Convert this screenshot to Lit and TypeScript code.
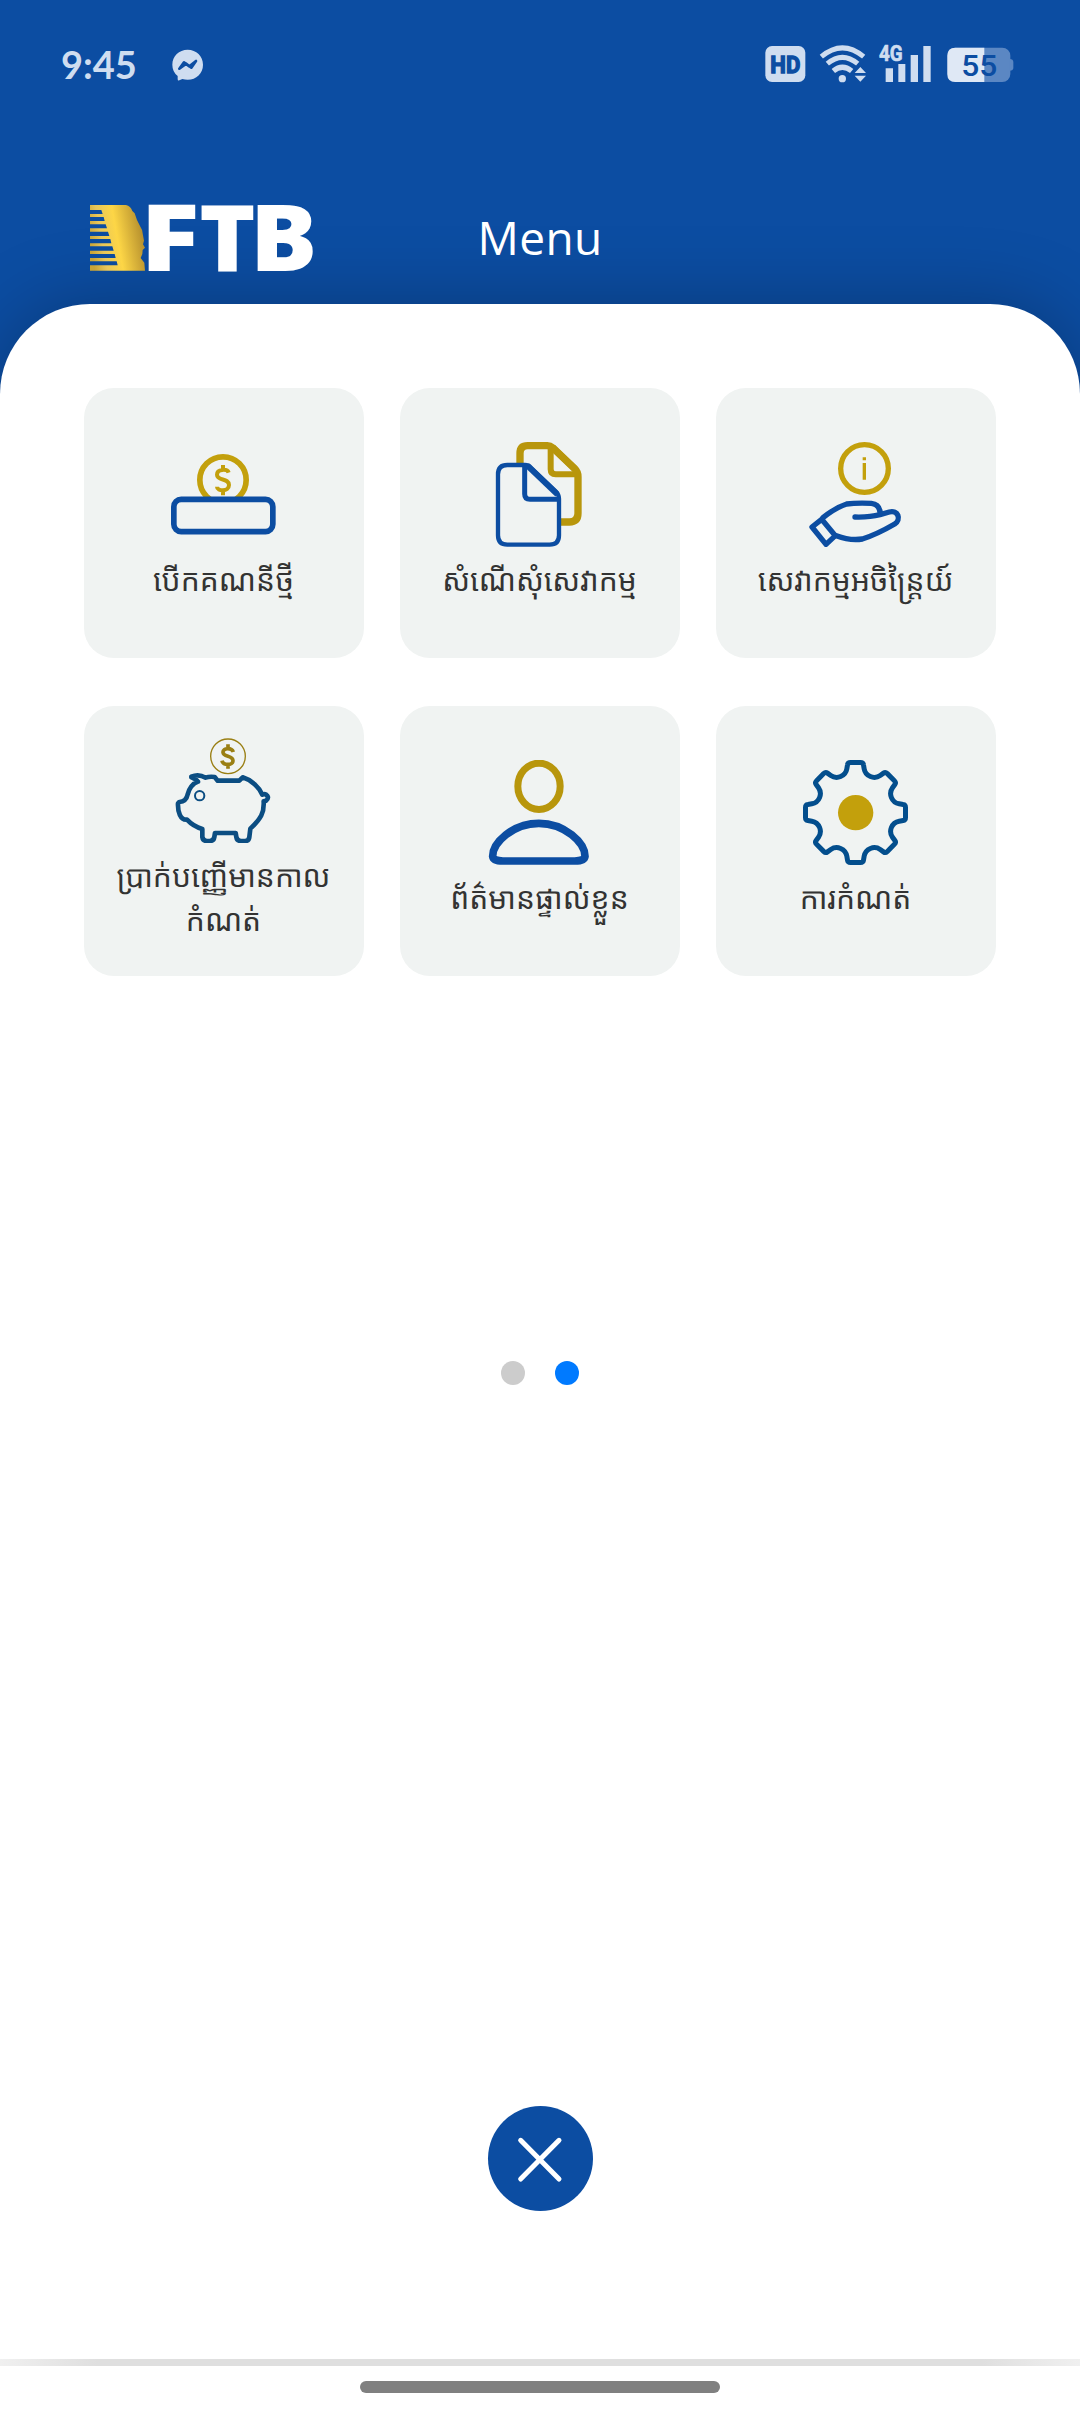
import { LitElement, html, svg, css } from "lit";
import { customElement, property } from "lit/decorators.js";

const BLUE = "#0c4da2";

/** Closed outline of an eight-tooth gear centred on (cx, cy). */
function gearPath(cx: number, cy: number): string {
  const parts: string[] = [];
  for (let i = 0; i < 8; i++) {
    const a = (i * Math.PI) / 4;
    const p = (x: number, y: number) =>
      `${(cx + x * Math.cos(a) - y * Math.sin(a)).toFixed(1)} ${(cy + x * Math.sin(a) + y * Math.cos(a)).toFixed(1)}`;
    parts.push(i === 0 ? `M${p(-26, -131)}` : `A31 31 0 0 0 ${p(-26, -131)}`);
    parts.push(`L${p(-24, -143)}Q${p(-23, -150)} ${p(-15, -150)}L${p(15, -150)}Q${p(23, -150)} ${p(24, -143)}L${p(26, -131)}`);
  }
  parts.push(`A31 31 0 0 0 ${(cx + (-26)).toFixed(1)} ${(cy - 131).toFixed(1)}Z`);
  return parts.join("");
}

const icons = {
  deposit: svg`<svg viewBox="273 186 315 315" fill="none">
    <circle cx="429" cy="300" r="69.5" stroke="#c3a00c" stroke-width="17"/>
    <path d="M446 278C442 266 411 266 411 284C411 304 447 293 447 315C447 336 411 335 411 320M429 255V270M429 332V346" stroke="#c3a00c" stroke-width="12"/>
    <rect x="281.5" y="358" width="297" height="97" rx="22" fill="#f0f3f2" stroke="${BLUE}" stroke-width="17"/>
  </svg>`,
  docs: svg`<svg viewBox="291 186 315 315" fill="none" stroke-linejoin="round">
    <path d="M390 250V220Q390 197 413 197H472Q481 197 488 203L554 266Q564 276 564 290V400Q564 426 538 426H505" stroke="#b8960c" stroke-width="22"/>
    <path d="M482 204V268Q482 283 497 283H560" stroke="#b8960c" stroke-width="18"/>
    <path d="M488 203L554 266" stroke="#b8960c" stroke-width="20"/>
    <path d="M352 255H405Q415 255 423 263L497 334Q507 344 507 356V466Q507 494 479 494H352Q324 494 324 466V283Q324 255 352 255Z" fill="#f0f3f2" stroke="${BLUE}" stroke-width="13"/>
    <path d="M404 257V342Q404 358 420 358H505" stroke="${BLUE}" stroke-width="15"/>
    <path d="M411 256L502 343" stroke="${BLUE}" stroke-width="17"/>
  </svg>`,
  hand: svg`<svg viewBox="309 186 315 315" fill="none" stroke-linecap="round" stroke-linejoin="round">
    <circle cx="493.500" cy="265.500" r="71.500" stroke="#c3a00c" stroke-width="16"/>
    <path d="M493 232V241M493 249V299" stroke="#c3a00c" stroke-width="10" stroke-linecap="butt"/>
    <g stroke="${BLUE}" stroke-width="16">
      <path d="M465 411C500 412 517 410 540 404L568 396C594 389 605 418 584 432C560 446 525 465 487 477C462 481 435 477 409 467"/>
      <path d="M541 401C540 383 532 372 514 370C490 369 462 369 440 372C415 380 385 400 369 413"/>
      <path d="M336 441L365 418L406 467L378 493Z"/>
    </g>
  </svg>`,
  piggy: svg`<svg viewBox="273 128 315 315" fill="none" stroke-linejoin="round">
    <circle cx="444" cy="183" r="52" stroke="#9a7f14" stroke-width="4"/>
    <path d="M460 170C455 156 428 157 429 171C430 186 459 180 459 196C459 211 429 211 426 196M444 147V160M444 206V220" stroke="#9a7f14" stroke-width="11"/>
    <circle cx="359" cy="301" r="14" stroke="#0b4d82" stroke-width="6"/>
    <path d="M334 244C348 238 365 240 377 247C388 243 397 244 404 245L413 256H478L488 246C515 254 537 276 547 298C560 292 570 306 558 316L551 318C553 352 543 370 511 400L508 425Q507 437 495 437H483Q471 437 469 425L467 413H405L403 425Q401 437 389 437H381Q369 437 367 425V401C349 396 337 390 321 373C301 375 293 350 294 324L298 320C312 319 320 312 323 297C328 279 337 265 354 259C350 251 341 250 334 246Z" stroke="#0b4d82" stroke-width="14"/>
  </svg>`,
  person: svg`<svg viewBox="291 195 315 315" fill="none">
    <ellipse cx="447" cy="274" rx="63.500" ry="69.500" stroke="#b8960c" stroke-width="21"/>
    <path d="M446.500 385C525 385 585 444 585 484Q583 498 554 498H339Q310 498 308 484C308 444 368 385 446.500 385Z" stroke="${BLUE}" stroke-width="23"/>
  </svg>`,
  gear: svg`<svg viewBox="309 195 315 315" fill="none">
    <path d="${gearPath(466.5, 352.5)}" stroke="#034e8d" stroke-width="15" stroke-linejoin="round"/>
    <circle cx="467" cy="353" r="53" fill="#c3a00c"/>
  </svg>`,
};

@customElement("menu-tile")
class MenuTile extends LitElement {
  @property() label = "";
  @property() icon: keyof typeof icons = "deposit";

  static styles = css`
    :host {
      display: flex;
      flex-direction: column;
      align-items: center;
      justify-content: center;
      gap: 11px;
      height: 270px;
      box-sizing: border-box;
      padding: 0 21px 2.5px 20px;
      border-radius: 30px;
      background: #f0f3f2;
    }
    .icon { width: 105px; height: 105px; display: flex; }
    .icon svg { width: 105px; height: 105px; }
    .label {
      font: 400 30px/43.5px "Noto Sans Khmer", "Noto Sans", "Khmer OS", sans-serif;
      color: #333;
      text-align: center;
    }
  `;

  render() {
    return html`<div class="icon">${icons[this.icon]}</div><div class="label">${this.label}</div>`;
  }
}

@customElement("status-bar")
class StatusBar extends LitElement {
  static styles = css`
    :host {
      display: flex;
      align-items: flex-start;
      justify-content: space-between;
      height: 100px;
      box-sizing: border-box;
      padding: 41px 66px 0 61px;
    }
    .left, .right { display: flex; align-items: flex-start; height: 44px; }
    .left { gap: 37px; }
    .time { font: 700 38px/46px Lato, sans-serif; color: #cfddf0; width: 74px; white-space: nowrap; }
    svg { display: block; }
    text { font-family: Roboto, sans-serif; font-weight: 700; }
    .level { font-weight: 500; }
  `;

  render() {
    return html`
      <div class="left">
        <div class="time">9:45</div>
        <svg width="32" height="44" viewBox="397 33 96 132">
          <path fill="#cfddf0" d="M444 59C470 59 490 78 490 104C490 130 470 149 444 149Q436 149 428 147L419 151Q414 153 414 147V138Q398 125 398 104C398 78 418 59 444 59Z"/>
          <path fill="none" stroke="${BLUE}" stroke-width="8" stroke-linejoin="round" stroke-linecap="round" d="M419 116L433 97L449 109L469 93L455 113L440 101Z"/>
        </svg>
      </div>
      <div class="right">
        <svg width="249" height="44" viewBox="74 33 747 132">
          <rect x="75" y="48" width="120" height="108" rx="20" fill="#cfddf0"/>
          <text x="90" y="128" font-size="72" textLength="90" lengthAdjust="spacingAndGlyphs" fill="${BLUE}" stroke="${BLUE}" stroke-width="4">HD</text>
          <g fill="none" stroke="#cfddf0" stroke-width="15">
            <path d="M243 80Q306 27 370 80"/>
            <path d="M261 101Q306 63 352 101"/>
            <path d="M279 123Q306 101 334 123" stroke-width="16"/>
          </g>
          <circle cx="306" cy="146" r="11" fill="#cfddf0"/>
          <path d="M343 129L360 111L377 129ZM343 137L360 155L377 137Z" fill="#cfddf0"/>
          <text x="416" y="94" font-size="66" textLength="71" lengthAdjust="spacingAndGlyphs" fill="#cfddf0" stroke="#cfddf0" stroke-width="2">4G</text>
          <path fill="#cfddf0" d="M436 115h22v41h-22zM474 102h21v54h-21zM511 75h22v81h-22zM549 48h22v108h-22z"/>
          <rect x="621" y="53" width="189" height="103" rx="24" fill="#5b87c3"/>
          <path d="M808 87Q819 87 819 96V113Q819 122 808 122Z" fill="#5b87c3"/>
          <path d="M645 53H732V156H645Q621 156 621 132V77Q621 53 645 53Z" fill="#dfe8f5"/>
          <text class="level" x="663" y="138" font-size="91" textLength="108" lengthAdjust="spacingAndGlyphs" fill="${BLUE}">55</text>
        </svg>
      </div>
    `;
  }
}

@customElement("app-root")
class AppRoot extends LitElement {
  static styles = css`
    :host {
      display: flex;
      flex-direction: column;
      width: 1080px;
      height: 2414px;
      overflow: hidden;
      background: #0c4da2;
    }
    .header {
      flex: none;
      display: grid;
      grid-template-columns: 1fr auto 1fr;
      align-items: center;
      height: 204px;
      box-sizing: border-box;
      padding: 72px 90px 0;
    }
    .logo { position: relative; z-index: 1; display: block; width: 224px; height: 68px; overflow: visible; }
    .logo text { font-family: "Open Sans", sans-serif; font-weight: 800; }
    .title {
      position: relative;
      z-index: 1;
      padding-bottom: 3px;
      font: 400 46px/60px "Open Sans", sans-serif;
      letter-spacing: 0.3px;
      color: #fff;
    }
    .sheet {
      flex: 1;
      display: flex;
      flex-direction: column;
      align-items: center;
      background: #fff;
      border-radius: 90px 90px 0 0;
      box-shadow: 0 0 75px rgba(0, 0, 0, 0.26);
      padding-top: 84px;
    }
    .tiles {
      display: grid;
      grid-template-columns: repeat(3, 280px);
      gap: 48px 36px;
      height: 973px;
      align-content: start;
    }
    .dots { display: flex; gap: 30px; height: 24px; }
    .dot { width: 24px; height: 24px; border-radius: 50%; background: #ccc; }
    .dot.active { background: #007aff; }
    .close {
      display: flex;
      margin-top: 721px;
      border: 0;
      padding: 0;
      width: 105px;
      height: 105px;
      border-radius: 50%;
      background: #0c4da2;
    }
    .close svg { width: 105px; height: 105px; }
    .nav {
      flex: none;
      display: flex;
      justify-content: center;
      height: 55px;
      box-sizing: border-box;
      padding-top: 22px;
      background:
        linear-gradient(to right, #f0f0f0, #dfdfdf 9%, #dfdfdf 91%, #f0f0f0) 0 0 / 100% 7px no-repeat,
        #fff;
    }
    .handle { width: 360px; height: 12px; border-radius: 6px; background: #808080; }
  `;

  private tiles: { icon: keyof typeof icons; label: string }[] = [
    { icon: "deposit", label: "បើកគណនីថ្មី" },
    { icon: "docs", label: "សំណើសុំសេវាកម្ម" },
    { icon: "hand", label: "សេវាកម្មអចិន្ត្រៃយ៍" },
    { icon: "piggy", label: "ប្រាក់បញ្ញើមានកាលកំណត់" },
    { icon: "person", label: "ព័ត៌មានផ្ទាល់ខ្លួន" },
    { icon: "gear", label: "ការកំណត់" },
  ];

  render() {
    return html`
      <status-bar></status-bar>
      <div class="header">
        <svg class="logo" viewBox="150 522 672 204">
          <defs>
            <linearGradient id="gold" gradientUnits="userSpaceOnUse" x1="150" y1="640" x2="315" y2="610">
              <stop offset="0" stop-color="#c9a436"/>
              <stop offset="0.22" stop-color="#e8c65a"/>
              <stop offset="0.5" stop-color="#fdd646"/>
              <stop offset="1" stop-color="#b08a2c"/>
            </linearGradient>
          </defs>
          <path fill="url(#gold)" d="M150 525H258Q272 528 277 543L284 550L291 570L300 588Q309 600 309 616L312 632L309 643L315 653L308 660L307 672L302 684L313 698L315 722H150V706H233L230 694H150V684H227L224 672H150V662H221L217 649H150V640H214L211 627H150V618H208L204 605H150V595H201L197 583H150V573H194L191 561H150V552H188L184 540H150Z"/>
          <g font-size="276" fill="#fff">
            <text x="301" y="722" textLength="178" lengthAdjust="spacingAndGlyphs">F</text>
            <text x="478" y="722" textLength="169" lengthAdjust="spacingAndGlyphs">T</text>
            <text x="630" y="722" textLength="202" lengthAdjust="spacingAndGlyphs">B</text>
          </g>
        </svg>
        <div class="title">Menu</div>
      </div>
      <div class="sheet">
        <div class="tiles">
          ${this.tiles.map((t) => html`<menu-tile .icon=${t.icon} .label=${t.label}></menu-tile>`)}
        </div>
        <div class="dots"><span class="dot"></span><span class="dot active"></span></div>
        <button class="close" aria-label="Close">
          <svg viewBox="54 48 315 315" fill="none" stroke="#fff" stroke-width="15" stroke-linecap="round">
            <path d="M152 151L267 267M267 151L152 267"/>
          </svg>
        </button>
      </div>
      <div class="nav"><div class="handle"></div></div>
    `;
  }
}
